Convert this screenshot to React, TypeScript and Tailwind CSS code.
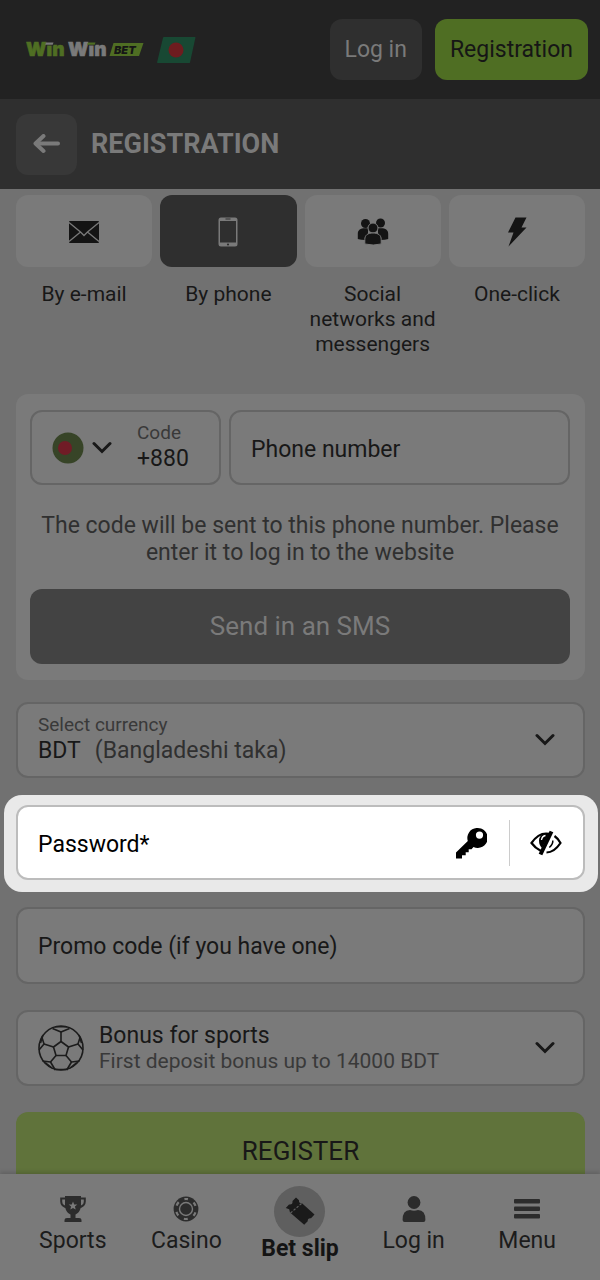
import React, { useState } from 'react';

const Logo = () => (
  <svg viewBox="0 0 120 32" className="w-[120px] h-8 shrink-0" role="img" aria-label="WinWin Bet">
    <g fontFamily="Inter, sans-serif" fontWeight="900" fontSize="19" strokeWidth="0.6">
      <text x="2" y="22" fill="#4f6e23" stroke="#4f6e23">Win</text>
      <text x="44" y="22" fill="#7a7a7a" stroke="#7a7a7a">Win</text>
    </g>
    <path d="M22.500 6h7v5.500h-7zM64.500 6h7v5.500h-7z" fill="#222222" />
    <path d="M22 8.500h7.500l-.8 2.200h-7.500z" fill="#7a7a7a" />
    <path d="M64 8.500h7.500l-.8 2.200h-7.500z" fill="#4f6e23" />
    <path d="M89.500 9h30l-4.500 13H85.500z" fill="#4f6e23" />
    <text x="90" y="19.500" fill="#161616" fontFamily="Inter, sans-serif" fontWeight="900" fontStyle="italic" fontSize="11">
      BET
    </text>
  </svg>
);

const FlagBadge = () => (
  <svg viewBox="0 0 40 28" className="w-10 h-7 shrink-0" role="img" aria-label="Bangladesh">
    <path d="M8 1h31q.6 0 .4.8L34 26.400q-.2.600-.8.600H1.800q-.9 0-.7-.8L7 1.800Q7.200 1 8 1z" fill="#184833" />
    <circle cx="20" cy="14" r="7.500" fill="#6e1c1f" />
  </svg>
);

const ArrowIcon = () => (
  <svg viewBox="0 0 28 20" className="w-7 h-5" fill="none" stroke="#7a7a7a" strokeWidth="4" strokeLinecap="round" strokeLinejoin="round">
    <path d="M10.500 2L2.500 9.500l8 7.500" />
    <path d="M3 9.500h22" />
  </svg>
);

const ChevronIcon = () => (
  <svg viewBox="0 0 20 14" className="w-5 h-[14px] shrink-0 pointer-events-none" fill="none" stroke="#181818" strokeWidth="3" strokeLinecap="round">
    <path d="M2 2.500l8 8 8-8" />
  </svg>
);

const MailIcon = () => (
  <svg viewBox="0 0 32 24" className="w-8 h-6">
    <rect x="1" y="1" width="30" height="22" rx="1" fill="#141414" />
    <path d="M1 2.500l11.500 9.500 3.500 3.500 3.500-3.500L31 2.500M1 21.500l11.500-9.500M31 21.500l-11.500-9.500" fill="none" stroke="#7a7a7a" strokeWidth="1.300" />
  </svg>
);

const PhoneIcon = () => (
  <svg viewBox="0 0 20 30" className="w-5 h-[30px]">
    <rect x="0.500" y="0.500" width="19" height="29" rx="2.500" fill="#7a7a7a" />
    <rect x="2" y="4" width="16" height="21.500" fill="#2f2f2f" />
    <path d="M7.500 2h5" stroke="#2f2f2f" />
    <circle cx="10" cy="27.500" r="1.100" fill="#2f2f2f" />
  </svg>
);

const UsersIcon = () => (
  <svg viewBox="0 0 32 28" className="w-8 h-7" fill="#141414">
    <circle cx="8.500" cy="5.500" r="4.500" />
    <circle cx="23.500" cy="5" r="4.500" />
    <path d="M.8 21v-5C.8 12 3.500 10.300 8 10.300h3V22q-7 .2-10.200-1zM31.200 21v-5c0-4-2.700-5.700-7.200-5.700h-3V22q7 .2 10.200-1z" />
    <circle cx="16" cy="10" r="5" stroke="#7a7a7a" strokeWidth="1" />
    <path d="M7.800 26v-4.500c0-4.200 2.700-6.500 8.200-6.500s8.200 2.300 8.200 6.500V26q-7.700 2-16.400 0z" stroke="#7a7a7a" strokeWidth="1" />
  </svg>
);

const BoltIcon = () => (
  <svg viewBox="0 0 20 30" className="w-5 h-[30px]" fill="#141414">
    <path d="M8.500.5h11L14.500 10.500H19.500L1.500 29.500 6.500 15.500H1z" />
  </svg>
);

const KeyIcon = () => (
  <svg viewBox="0 0 32 32" className="w-8 h-8">
    <path
      fillRule="evenodd"
      d="M21.500 1a10 10 0 1 1-3 19l-2 2.200h-2.800v3h-3v3H7V31.500H1v-6L12.800 14A10 10 0 0 1 21.500 1zm3 3.500a3.600 3.600 0 1 0 0 7.200 3.600 3.600 0 0 0 0-7.200z"
    />
  </svg>
);

const EyeOffIcon = () => (
  <svg viewBox="0 0 32 26" className="w-8 h-[26px]" fill="none" stroke="#000" strokeWidth="2.200">
    <path d="M11 21C7 19 4 16.500 1.500 13 6 6.500 11 3.500 16 3.500q2 0 3.500.4M24.500 6c2.500 1.800 4.500 4 6 7-4 6-8.500 9.500-14 9.500" />
    <path d="M19 3.500c-5-1.500-10 2-10 7 0 4 1.500 6 3 7.500z" fill="#000" stroke="none" />
    <path d="M11.500 10q.5-4 4-4.500" stroke="#fff" strokeWidth="1.300" />
    <path d="M21.500 1.500L10.500 24.500" strokeWidth="4" />
    <path d="M22.800 10.500q.4 3.500-3.500 7" strokeWidth="1.500" />
  </svg>
);

const BallIcon = () => (
  <svg viewBox="0 0 46 46" className="w-[46px] h-[46px] shrink-0" fill="none" stroke="#1c1c1c" strokeWidth="1.600" strokeLinejoin="round">
    <circle cx="23" cy="23" r="22" />
    <path d="M23 16.500l7.500 5.500-2.500 8.500H18L15.500 22z" />
    <path d="M23 16.500V7M30.500 22l9.500-3M28 30.500l5.500 6.500M18 30.500l-5.500 6.500M15.500 22L6 19" />
    <path d="M14.500 3.500L23 7l8.500-3.500M17 1.800h12M42 12.500L40 19l5 6M41 10l2.500 8M4 12.500L6 19l-5 6M5 10L2.500 18" />
    <path d="M41.500 36l-8 1-4.500 7.500M32 43l7.500-6M4.500 36l8 1 4.500 7.500M14 43l-7.500-6M16 44.500h14" />
  </svg>
);

const TrophyIcon = () => (
  <svg viewBox="0 0 26 26" className="w-[26px] h-[26px]">
    <path d="M6.500 2.500H1.200v3c0 3.500 3 5.500 6.800 5.800M19.500 2.500h5.300v3c0 3.500-3 5.500-6.800 5.800" fill="none" stroke="#2c2c2c" strokeWidth="2" />
    <path d="M5 0h16v8.500c0 5-2 8.500-5.500 10v3.500h3.500q2.500 0 2.500 2v2H4.500v-2q0-2 2.500-2h3.500v-3.500C7 17 5 13.500 5 8.500z" fill="#2c2c2c" />
    <path d="M13 5.500l1.200 2.900 3.100.2-2.400 2 .8 3-2.700-1.700-2.700 1.700.8-3-2.400-2 3.100-.2z" fill="#7a7a7a" />
  </svg>
);

const ChipIcon = () => (
  <svg viewBox="0 0 26 26" className="w-[26px] h-[26px]" fill="none">
    <circle cx="13" cy="13" r="12.400" fill="#2c2c2c" />
    <circle cx="13" cy="13" r="6.500" stroke="#7a7a7a" strokeWidth="1.400" />
    <circle cx="13" cy="13" r="10" stroke="#7a7a7a" strokeWidth="2.200" strokeDasharray="4 6.470" strokeDashoffset="2" transform="rotate(-90 13 13)" />
  </svg>
);

const TicketIcon = () => (
  <svg viewBox="0 0 32 32" className="w-8 h-8">
    <path
      d="M12 1.500l3 2.800q-.5 3.200 3 3L30.500 18.500 27 22.200q-3.500-.5-3.300 3l-3.500 3.500L6 16.500l-.8-3.200L1.800 12 5 8.500q4 .5 3.500-3.500z"
      fill="#1a1a1a"
    />
    <path d="M17.500 7.500L6.500 17" stroke="#5f5f5f" strokeWidth="1.200" strokeDasharray="2.500 1.500" />
  </svg>
);

const UserIcon = () => (
  <svg viewBox="0 0 26 26" className="w-[26px] h-[26px]" fill="#2c2c2c">
    <circle cx="13" cy="6.500" r="6.400" />
    <path d="M3.500 26q-1.800 0-1.900-2Q1.500 14 9 14q4 1.500 8 0 7.500 0 7.400 10-.1 2-1.900 2z" />
  </svg>
);

const BarsIcon = () => (
  <svg viewBox="0 0 26 26" className="w-[26px] h-[26px]" fill="#2c2c2c">
    <rect y="3" width="26" height="4.500" rx="1" />
    <rect y="10.500" width="26" height="4.500" rx="1" />
    <rect y="18" width="26" height="4.500" rx="1" />
  </svg>
);

const methods = [
  { id: 'email', label: 'By e-mail', icon: <MailIcon /> },
  { id: 'phone', label: 'By phone', icon: <PhoneIcon /> },
  { id: 'social', label: 'Social networks and messengers', icon: <UsersIcon /> },
  { id: 'click', label: 'One-click', icon: <BoltIcon /> },
];

const Header = () => (
  <header className="shrink-0">
    <div className="flex items-center h-[99px] pl-6 pr-3 bg-[#222222]">
      <a href="#home" className="shrink-0">
        <Logo />
      </a>
      <button className="ml-3" aria-label="Change country">
        <FlagBadge />
      </button>
      <div className="ml-auto flex gap-[13px] text-[23px]">
        <button className="h-[61px] px-[15px] pt-[2px] rounded-xl bg-[#2f2f2f] text-[#7a7a7a]">Log in</button>
        <button className="h-[61px] px-[15px] pt-[2px] rounded-xl bg-[#4f6e23] text-[#161616]">Registration</button>
      </div>
    </div>
    <div className="flex items-center gap-[14px] h-[90px] px-4 bg-[#2f2f2f]">
      <button className="w-[61px] h-[61px] rounded-xl bg-[#383838] flex items-center justify-center" aria-label="Back">
        <ArrowIcon />
      </button>
      <h1 className="text-[27px] font-bold text-[#7a7a7a]">REGISTRATION</h1>
    </div>
  </header>
);

const BottomNav = () => (
  <nav className="shrink-0 h-[106px] px-4 grid grid-cols-5 bg-[#7a7a7a] text-[23px] text-[#1c1c1c] shadow-[0_-2px_4px_rgba(0,0,0,0.15)] z-10">
    <a href="#sports" className="flex flex-col items-center gap-[5px] pt-[22px] leading-7">
      <TrophyIcon />
      Sports
    </a>
    <a href="#casino" className="flex flex-col items-center gap-[5px] pt-[22px] leading-7">
      <ChipIcon />
      Casino
    </a>
    <a href="#betslip" className="flex flex-col items-center pt-3 leading-6 font-bold text-[#141414]">
      <span className="w-[51px] h-[51px] rounded-full bg-[#5f5f5f] flex items-center justify-center">
        <TicketIcon />
      </span>
      Bet slip
    </a>
    <a href="#login" className="flex flex-col items-center gap-[5px] pt-[22px] leading-7">
      <UserIcon />
      Log in
    </a>
    <a href="#menu" className="flex flex-col items-center gap-[5px] pt-[22px] leading-7">
      <BarsIcon />
      Menu
    </a>
  </nav>
);

const App: React.FC = () => {
  const [method, setMethod] = useState('phone');
  const [showPassword, setShowPassword] = useState(false);

  return (
    <div className="h-screen flex flex-col bg-[#717171] font-[Roboto,sans-serif] text-[#181818]">
      <Header />

      <main className="flex-1 min-h-0 overflow-y-auto [scrollbar-width:none] pt-[6px] pl-4 pr-[15px]">
        {/* Registration methods */}
        <div className="grid grid-cols-4 gap-2">
          {methods.map((m) => (
            <button key={m.id} onClick={() => setMethod(m.id)} className="flex flex-col items-center gap-[15px]">
              <span
                className={`w-full h-[72px] pt-px rounded-xl flex items-center justify-center ${
                  method === m.id ? 'bg-[#2f2f2f]' : 'bg-[#7a7a7a]'
                }`}
              >
                {m.icon}
              </span>
              <span className="text-[21px] leading-[25px]">{m.label}</span>
            </button>
          ))}
        </div>

        <form onSubmit={(e) => e.preventDefault()}>
          {/* Phone */}
          <section className="mt-[37px] pl-[14px] pr-[15px] py-4 rounded-xl bg-[#7a7a7a]">
            <div className="flex gap-2">
              <label className="w-[191px] h-[75px] shrink-0 flex items-center rounded-xl border-2 border-[#656565] pl-5">
                <svg viewBox="0 0 32 32" className="w-8 h-8">
                  <circle cx="16" cy="16" r="15.500" fill="#374427" />
                  <circle cx="13" cy="16" r="7" fill="#701c26" />
                </svg>
                <span className="ml-2">
                  <ChevronIcon />
                </span>
                <span className="ml-[25px] pb-[2px] flex flex-col">
                  <span className="text-[19px] leading-6 text-[#393939]">Code</span>
                  <select className="appearance-none outline-none bg-transparent text-[23px] leading-7" defaultValue="+880">
                    <option>+880</option>
                  </select>
                </span>
              </label>
              <input
                type="tel"
                aria-label="Phone number"
                placeholder="Phone number"
                className="flex-1 min-w-0 h-[75px] rounded-xl border-2 border-[#656565] px-5 pt-1 text-[23px] outline-none placeholder:text-[#181818]"
              />
            </div>
            <p className="mt-[27px] text-center text-[23px] leading-[27px] text-[#303030]">
              The code will be sent to this phone number. Please enter it to log in to the website
            </p>
            <button type="button" className="mt-[23px] w-full h-[75px] rounded-xl bg-[#434343] text-[26px] text-[#7a7a7a]">
              Send in an SMS
            </button>
          </section>

          {/* Currency */}
          <label className="mt-[22px] h-[76px] flex items-center rounded-xl border-2 border-[#656565] bg-[#7a7a7a] pl-5 pr-7">
            <span className="flex-1 pb-[2px] flex flex-col">
              <span className="text-[19px] leading-6 text-[#393939]">Select currency</span>
              <span className="flex gap-[14px] text-[23px] leading-7">
                BDT
                <select className="flex-1 appearance-none outline-none bg-transparent text-[#303030]">
                  <option>(Bangladeshi taka)</option>
                </select>
              </span>
            </span>
            <ChevronIcon />
          </label>

          {/* Password, highlighted */}
          <div className="mt-[17px] -ml-3 -mr-[13px] pl-3 pr-[13px] pt-[10px] pb-3 rounded-[18px] bg-[#e9e9e9]">
            <div className="h-[75px] flex items-center rounded-xl border-2 border-[#bcbcbc] bg-white pl-5 pr-[21px] text-black">
              <input
                type={showPassword ? 'text' : 'password'}
                aria-label="Password"
                placeholder="Password*"
                className="flex-1 min-w-0 h-full pt-1 text-[23px] outline-none placeholder:text-black"
              />
              <button type="button" aria-label="Generate password">
                <KeyIcon />
              </button>
              <span className="w-px h-[46px] ml-[22px] mr-5 bg-[#cccccc]" />
              <button type="button" aria-label="Show password" onClick={() => setShowPassword(!showPassword)}>
                <EyeOffIcon />
              </button>
            </div>
          </div>

          <input
            type="text"
            aria-label="Promo code"
            placeholder="Promo code (if you have one)"
            className="mt-[15px] w-full h-[77px] rounded-xl border-2 border-[#656565] bg-[#7a7a7a] px-5 pt-[2px] text-[23px] outline-none placeholder:text-[#181818]"
          />

          {/* Bonus */}
          <label className="mt-[26px] h-[76px] flex items-center rounded-xl border-2 border-[#656565] bg-[#7a7a7a] pl-5 pr-7">
            <BallIcon />
            <span className="flex-1 ml-[15px] flex flex-col">
              <select className="appearance-none outline-none bg-transparent text-[23px] leading-[26px]">
                <option>Bonus for sports</option>
              </select>
              <span className="text-[21px] leading-6 text-[#393939]">First deposit bonus up to 14000 BDT</span>
            </span>
            <ChevronIcon />
          </label>

          <button type="submit" className="mt-[26px] w-full h-[78px] rounded-xl bg-[#60733b] text-[26px]">
            REGISTER
          </button>
        </form>
      </main>

      <BottomNav />
    </div>
  );
};

export default App;
